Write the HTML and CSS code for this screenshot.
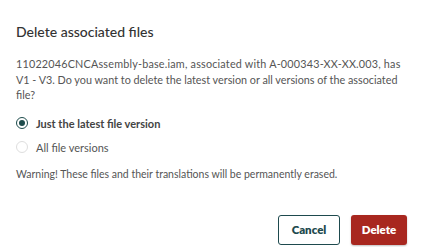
FILE: index.html
```html
<!DOCTYPE html>
<html>
<head>
<meta charset="utf-8">
<link rel="stylesheet" href="styles.css">
</head>
<body>
<div class="dialog">
  <h1 class="title">Delete associated files</h1>
  <p class="message"><span class="ref">11022046CNCAssembly-base.iam, associated with A-000343-XX-XX.003, has</span> V1 - V3. Do you want to delete the latest version or all versions of the associated file?</p>
  <div class="options">
    <label class="option selected"><span class="radio checked"></span><span class="label">Just the latest file version</span></label>
    <label class="option"><span class="radio"></span><span class="label">All file versions</span></label>
  </div>
  <p class="warning">Warning! These files and their translations will be permanently erased.</p>
  <div class="actions">
    <button class="btn btn-secondary">Cancel</button>
    <button class="btn btn-danger">Delete</button>
  </div>
</div>
</body>
</html>
```
FILE: styles.css
```css
html, body {
  margin: 0;
  padding: 0;
  background: #ffffff;
}
body {
  font-family: "Lato", "Noto Sans", sans-serif;
  color: #555555;
  width: 426px;
  height: 247px;
  overflow: hidden;
}
.dialog {
  padding: 22px 16px 0 16px;
  display: flex;
  flex-direction: column;
}
.title {
  margin: 0;
  font-size: 14px;
  font-weight: 500;
  color: #333333;
  line-height: 20px;
}
.message {
  margin: 14px 0 0 0;
  font-size: 10.8px;
  letter-spacing: 0;
  line-height: 15.5px;
  color: #555555;
}
.message .ref {
  letter-spacing: 0.2px;
}
.options {
  margin-top: 14px;
  display: flex;
  flex-direction: column;
  gap: 11px;
}
.option {
  display: flex;
  align-items: center;
  gap: 8px;
  font-size: 11px;
  line-height: 13px;
  color: #555555;
}
.option.selected .label {
  font-weight: 700;
  color: #444444;
}
.radio {
  width: 12px;
  height: 12px;
  box-sizing: border-box;
  border-radius: 50%;
  border: 1px solid #dedede;
  background: #ffffff;
  display: flex;
  align-items: center;
  justify-content: center;
}
.radio.checked {
  border: 1.5px solid #1e4c4c;
}
.radio.checked::after {
  content: "";
  width: 6px;
  height: 6px;
  border-radius: 50%;
  background: #1e4c4c;
}
.warning {
  margin: 13px 0 0 0;
  font-size: 10.5px;
  line-height: 14px;
  color: #555555;
}
.actions {
  margin-top: 34px;
  display: flex;
  justify-content: flex-end;
  gap: 11px;
  padding-right: 3px;
}
.btn {
  font-family: "Lato", "Noto Sans", sans-serif;
  font-size: 11.5px;
  font-weight: 800;
  height: 30px;
  border-radius: 3px;
  box-sizing: border-box;
  cursor: pointer;
}
.btn-secondary {
  width: 62px;
  background: #ffffff;
  border: 1.5px solid #1e4a4e;
  color: #1e4a4e;
}
.btn-danger {
  width: 56px;
  background: #a8271f;
  border: none;
  color: #ffffff;
  box-shadow: 0 1px 2px rgba(0,0,0,0.25);
}
```
